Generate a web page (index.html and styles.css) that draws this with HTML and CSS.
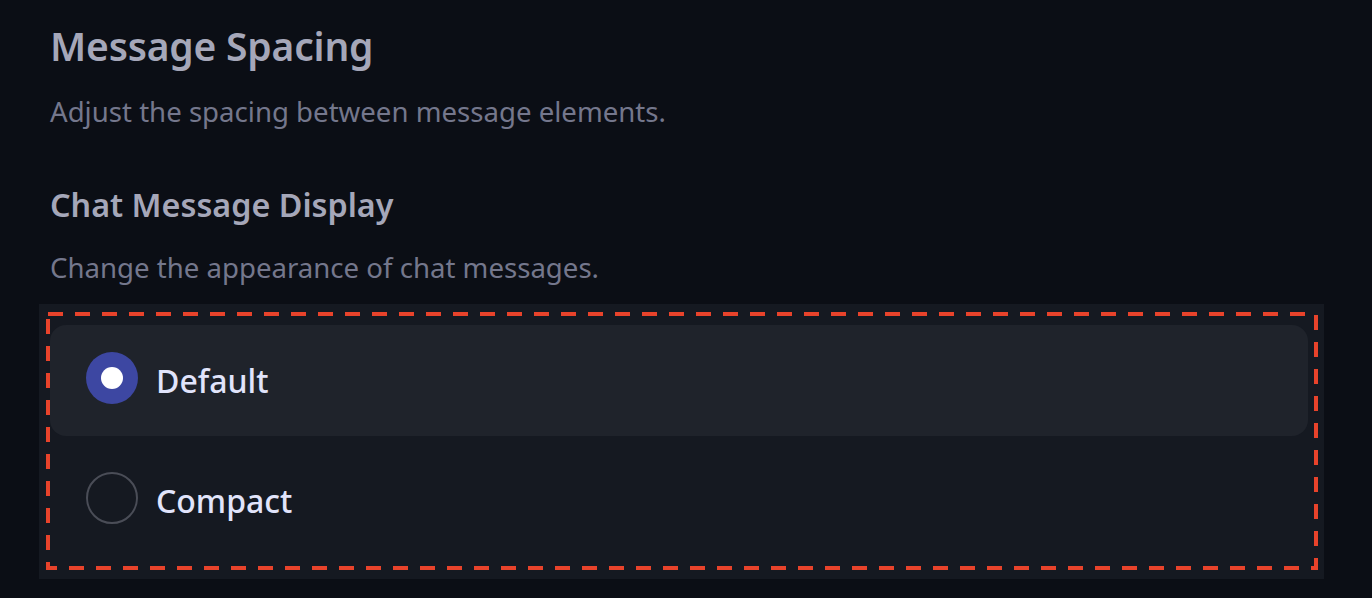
FILE: index.html
```html
<!DOCTYPE html>
<html lang="en">
<head>
<meta charset="utf-8">
<title>Message Spacing</title>
<link rel="stylesheet" href="styles.css">
</head>
<body>
<main class="page">
  <h1 class="title">Message Spacing</h1>
  <p class="desc">Adjust the spacing between message elements.</p>
  <h2 class="subtitle">Chat Message Display</h2>
  <p class="desc desc-2">Change the appearance of chat messages.</p>
  <div class="panel">
    <div class="option selected">
      <span class="radio radio-on"><span class="dot"></span></span>
      <span class="label">Default</span>
    </div>
    <div class="option">
      <span class="radio"></span>
      <span class="label">Compact</span>
    </div>
    <svg class="highlight" width="1272" height="258" viewBox="0 0 1272 258" aria-hidden="true">
      <rect x="2" y="2" width="1268" height="254" fill="none" stroke="#e8432b" stroke-width="4" stroke-dasharray="15 12"/>
    </svg>
  </div>
</main>
</body>
</html>
```
FILE: styles.css
```css
html, body {
  margin: 0;
  padding: 0;
  background: #0b0e15;
}
body {
  width: 1372px;
  height: 598px;
  overflow: hidden;
  font-family: "Noto Sans", "Open Sans", sans-serif;
}
.page {
  display: flex;
  flex-direction: column;
  padding: 20px 0 0 39px;
  width: 1285px;
}
.title {
  margin: 0 0 0 11px;
  font-size: 39px;
  line-height: 52px;
  font-weight: 600;
  color: #a5a7b9;
  letter-spacing: -0.2px;
}
.desc {
  margin: 21px 0 0 11px;
  font-size: 27.6px;
  line-height: 36px;
  font-weight: 400;
  color: #74778c;
}
.subtitle {
  margin: 53px 0 0 11px;
  font-size: 32.3px;
  line-height: 44px;
  font-weight: 600;
  color: #a5a7b9;
}
.desc-2 {
  margin-top: 23px;
}
.panel {
  position: relative;
  margin-top: 19px;
  background: #151921;
  padding: 21px 16px 23px 11px;
  display: flex;
  flex-direction: column;
  gap: 9px;
}
.highlight {
  position: absolute;
  top: 8px;
  left: 7px;
  pointer-events: none;
}
.option {
  height: 111px;
  display: flex;
  align-items: center;
  gap: 18px;
  padding-left: 36px;
  border-radius: 16px;
}
.option.selected {
  background: #1f232b;
}
.radio {
  box-sizing: border-box;
  width: 52px;
  height: 52px;
  border-radius: 50%;
  border: 2px solid #4a4d57;
  display: flex;
  align-items: center;
  justify-content: center;
  margin-top: -6px;
}
.radio-on {
  border: none;
  background: #3d47a2;
}
.dot {
  width: 22px;
  height: 22px;
  border-radius: 50%;
  background: #ffffff;
}
.label {
  font-size: 32px;
  line-height: 40px;
  font-weight: 500;
  color: #e1e4fb;
}
```
